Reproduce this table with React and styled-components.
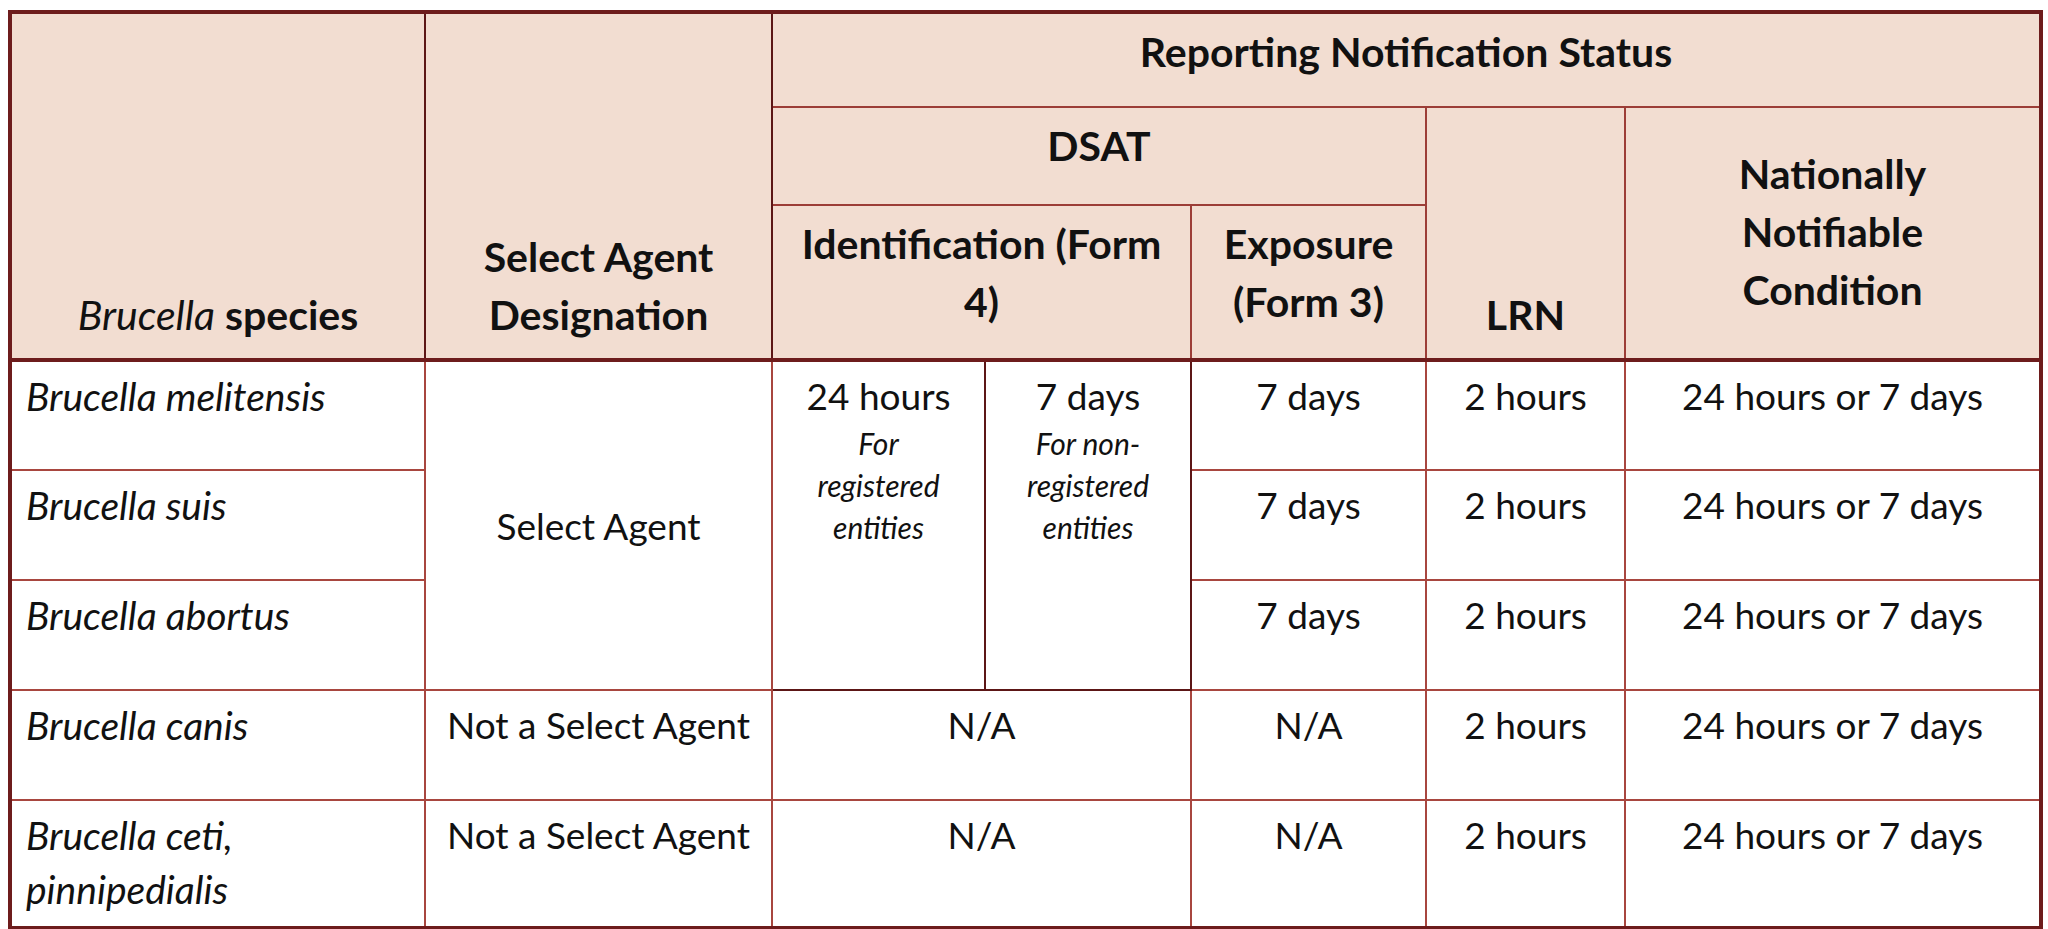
import styled, { createGlobalStyle } from "styled-components";

const GlobalStyle = createGlobalStyle`
  html, body {
    margin: 0;
    padding: 0;
    background: #ffffff;
  }
  body {
    font-family: Lato, "Open Sans", "Liberation Sans", sans-serif;
    color: #111111;
  }
`;

const Page = styled.div`
  padding: 10px 4px 2px 8px;
`;

const Table = styled.table`
  width: 2031px;
  table-layout: fixed;
  border-collapse: collapse;
  border: 4px solid #6d1c1c;
  font-size: 37px;
`;

const Head = styled.thead`
  background: #f2ddd1;
  border-bottom: 4px solid #6d1c1c;
`;

const Row = styled.tr`
  height: ${(p) => p.$h}px;
`;

const HeadCell = styled.th`
  font-weight: 700;
  font-size: 41px;
  line-height: 58px;
  text-align: center;
  vertical-align: ${(p) => p.$valign || "top"};
  padding: ${(p) =>
    p.$valign === "bottom"
      ? `0 ${p.$pad || 10}px 14px`
      : p.$valign === "middle"
      ? `0 ${p.$pad || 10}px 3px`
      : `9px ${p.$pad || 10}px 0`};
  border: 2px solid ${(p) => (p.$dark ? "#5c1616" : "#9c3d37")};
`;

const Cell = styled.td`
  line-height: 54px;
  font-size: ${(p) => (p.$left ? 39 : 37)}px;
  text-align: ${(p) => (p.$left ? "left" : "center")};
  vertical-align: ${(p) => p.$valign || "top"};
  padding: ${(p) =>
    p.$valign === "middle"
      ? "0 12px"
      : p.$left
      ? "7px 12px 0 14px"
      : `7px ${p.$pad || 12}px 0`};
  border: 2px solid ${(p) => (p.$dark ? "#5c1616" : "#a8463f")};
  font-style: ${(p) => (p.$left ? "italic" : "normal")};
  background: #ffffff;
`;

const Note = styled.div`
  font-style: italic;
  font-size: 30px;
  line-height: 42px;
  margin-top: -1px;
`;

const Em = styled.i`
  font-weight: 400;
`;

const species = [
  "Brucella melitensis",
  "Brucella suis",
  "Brucella abortus",
];

export default function App() {
  return (
    <Page>
      <GlobalStyle />
      <Table>
        <colgroup>
          <col style={{ width: 415 }} />
          <col style={{ width: 347 }} />
          <col style={{ width: 213 }} />
          <col style={{ width: 206 }} />
          <col style={{ width: 235 }} />
          <col style={{ width: 199 }} />
          <col style={{ width: 416 }} />
        </colgroup>
        <Head>
          <Row $h={95}>
            <HeadCell rowSpan={3} $valign="bottom" $dark>
              <Em>Brucella</Em> species
            </HeadCell>
            <HeadCell rowSpan={3} $valign="bottom" $dark>
              Select Agent Designation
            </HeadCell>
            <HeadCell colSpan={5}>Reporting Notification Status</HeadCell>
          </Row>
          <Row $h={98}>
            <HeadCell colSpan={3}>DSAT</HeadCell>
            <HeadCell rowSpan={2} $valign="bottom">
              LRN
            </HeadCell>
            <HeadCell rowSpan={2} $valign="middle" $pad={60}>
              Nationally Notifiable Condition
            </HeadCell>
          </Row>
          <Row $h={155}>
            <HeadCell colSpan={2} $pad={24}>
              Identification (Form 4)
            </HeadCell>
            <HeadCell>Exposure (Form 3)</HeadCell>
          </Row>
        </Head>
        <tbody>
          {species.map((name, i) => (
            <Row key={name} $h={110}>
              <Cell $left>{name}</Cell>
              {i === 0 && (
                <>
                  <Cell rowSpan={3} $valign="middle">
                    Select Agent
                  </Cell>
                  <Cell rowSpan={3} $dark $pad={26}>
                    24 hours
                    <Note>For registered entities</Note>
                  </Cell>
                  <Cell rowSpan={3} $dark $pad={20}>
                    7 days
                    <Note>For non-registered entities</Note>
                  </Cell>
                </>
              )}
              <Cell>7 days</Cell>
              <Cell>2 hours</Cell>
              <Cell>24 hours or 7 days</Cell>
            </Row>
          ))}
          <Row $h={110}>
            <Cell $left>Brucella canis</Cell>
            <Cell>Not a Select Agent</Cell>
            <Cell colSpan={2}>N/A</Cell>
            <Cell>N/A</Cell>
            <Cell>2 hours</Cell>
            <Cell>24 hours or 7 days</Cell>
          </Row>
          <Row $h={128}>
            <Cell $left>Brucella ceti, pinnipedialis</Cell>
            <Cell>Not a Select Agent</Cell>
            <Cell colSpan={2}>N/A</Cell>
            <Cell>N/A</Cell>
            <Cell>2 hours</Cell>
            <Cell>24 hours or 7 days</Cell>
          </Row>
        </tbody>
      </Table>
    </Page>
  );
}
